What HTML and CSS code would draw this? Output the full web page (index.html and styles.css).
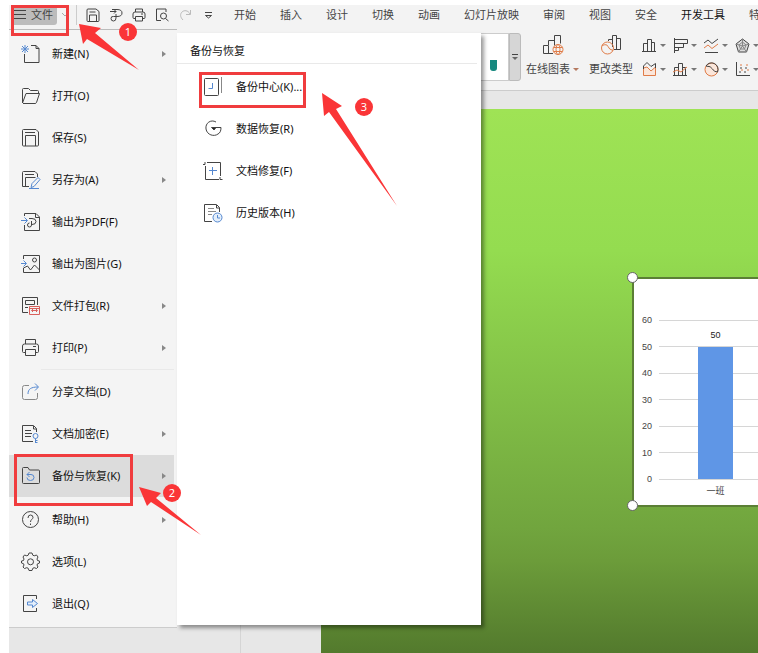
FILE: index.html
```html
<!doctype html>
<html lang="zh-CN">
<head>
  <meta charset="utf-8">
  <title>演示文稿</title>
  <link rel="stylesheet" href="styles.css">
</head>
<body>
  <div class="app">
    <header class="ribbon">
      <div class="tab-row">
        <button class="file-button">
          <svg width="13" height="12" viewBox="0 0 13 12"><path d="M0 1.500h13M0 5.500h13M0 9.500h13"/></svg>文件
        </button>
        <button class="file-more" aria-label="更多"><svg width="8" height="6" viewBox="0 0 8 6"><path d="M1 1l3 3 3-3"/></svg></button>
        <div class="quick">
          <button aria-label="保存"><svg width="14" height="14" viewBox="0 0 14 14"><path d="M1 2q0-1 1-1h8l3 2.500v9q0 1-1 1H2q-1 0-1-1zM3.500 4h6M3.500 13V7h7v6"/></svg></button>
          <button aria-label="输出为PDF"><svg width="14" height="14" viewBox="0 0 14 14"><path d="M3 1.500h5q5 0 5 3.500T8 8.500H7M1 3.500h6M5 1.500l2 2-2 2M7 6v4q0 3-2.500 3T2 10.500t2.500-2H7"/></svg></button>
          <button aria-label="打印"><svg width="14" height="14" viewBox="0 0 14 14"><path d="M3.500 4V1h7v3M3.500 10.500H2q-1 0-1-1V6q0-2 2-2h8q2 0 2 2v3.500q0 1-1 1h-1.500M3.500 8.500h7V13h-7zM9 6h2"/></svg></button>
          <button aria-label="打印预览"><svg width="14" height="14" viewBox="0 0 14 14"><path d="M6 12.500H1.500V1H11v3M10.500 10.500L13.500 13"/><circle cx="8.500" cy="8" r="3"/></svg></button>
          <button class="faded" aria-label="恢复"><svg width="14" height="14" viewBox="0 0 14 14"><path d="M12.500 2v4.500H8M12 6C10 2 6 2 4 4s-2 5 1 8"/></svg></button>
          <button aria-label="自定义"><svg width="14" height="14" viewBox="0 0 14 14"><path d="M4 4.500h7M4.500 7.500L7.500 10l3-2.500z"/></svg></button>
        </div>
        <nav class="tabs">
          <button>开始</button>
          <button>插入</button>
          <button>设计</button>
          <button>切换</button>
          <button>动画</button>
          <button>幻灯片放映</button>
          <button>审阅</button>
          <button>视图</button>
          <button>安全</button>
          <button class="strong">开发工具</button>
          <button>特色</button>
        </nav>
      </div>
      <div class="tools">
        <div class="gallery"><i class="swatch"></i></div>
        <button class="gallery-more" aria-label="更多样式"><svg width="6" height="6" viewBox="0 0 6 6"><path d="M0 .5h6"/><path class="solid" d="M0 3h6L3 6z"/></svg></button>
        <button class="big-tool">
          <svg width="24" height="24" viewBox="0 0 24 24">
            <path class="dark" d="M12 20.500H2.500v-8h5v8M7.500 12V7.500h6v5M13.500 11V2.500h6v8"/>
            <g class="orange"><circle cx="17" cy="16.500" r="5"/><ellipse cx="17" cy="16.500" rx="2" ry="5"/><path d="M12.500 14.500h9M12.500 18.500h9"/></g>
          </svg>
          <span>在线图表<i class="caret orange-caret"></i></span>
        </button>
        <button class="big-tool second">
          <svg width="24" height="24" viewBox="0 0 24 24">
            <path class="dark" d="M9.500 8V6.500h4V13M13.500 14V2.500h4V17M17.500 5.500h4v11H15"/>
            <g class="orange"><circle cx="8.500" cy="15" r="6"/><path d="M3 12.500q5-2 6 1t5 4"/></g>
          </svg>
          <span>更改类型</span>
        </button>
        <div class="chart-types">
          <button aria-label="柱形图"><svg width="15" height="15" viewBox="0 0 15 15"><path class="dark" d="M0 13.500h14M1.500 13.500v-8h4M5.500 13.500v-12h4v12M9.500 4.500h3v9"/></svg><i class="caret"></i></button>
          <button aria-label="条形图"><svg width="15" height="15" viewBox="0 0 15 15"><path class="dark" d="M1.500 0v15M1.500 1.500h13v4h-13M10.500 5.500v4h-9M5.500 9.500v3h-4"/></svg><i class="caret"></i></button>
          <button aria-label="折线图"><svg width="15" height="15" viewBox="0 0 15 15"><path class="dark" d="M0 5l4-3 4 3.500L14 1M1 14.500h13"/><path class="orange" d="M0 10l4-3 4 3.500L14 6"/></svg><i class="caret"></i></button>
          <button aria-label="雷达图"><svg width="15" height="15" viewBox="0 0 15 15"><path class="dark shade" d="M7.500 1L14 6l-2.500 8h-8L1 6z"/><path class="gray" d="M7.500 4L11 7l-1.500 4h-4L4 7zM7.500 1v7M14 6L7.500 8l4 6M3.500 14l4-6L1 6"/></svg><i class="caret"></i></button>
          <button aria-label="面积图"><svg width="15" height="15" viewBox="0 0 15 15"><path class="orange pale-orange" d="M1.500 6v7.500h12V5L9 9 5 5z"/><path class="dark" d="M1.500 7V4L5 .5l4 4 4.500-3V6"/></svg><i class="caret"></i></button>
          <button aria-label="组合图"><svg width="15" height="15" viewBox="0 0 15 15"><path class="dark" d="M0 13.500h14M1.500 13.500v-8h4M5.500 13.500v-12h4v12M9.500 5.500h3v8"/><path class="orange" d="M0 10l4-2 4 2 6-5"/></svg><i class="caret"></i></button>
          <button aria-label="饼图"><svg width="15" height="15" viewBox="0 0 15 15"><circle class="orange pale-orange" cx="7.500" cy="7.500" r="6.500"/><path class="dark" d="M2 4A6.500 6.500 0 0 1 13.500 10Q10 10 8.500 7T2 4"/></svg><i class="caret"></i></button>
          <button aria-label="散点图"><svg width="15" height="15" viewBox="0 0 15 15"><path class="dark" d="M1.500 0v13.500H15"/><path class="dark" stroke-dasharray="2 3" d="M4 10h10M5 6h9"/><path class="orange" stroke-dasharray="2 4" d="M5 3h9M6 8h8"/></svg><i class="caret"></i></button>
        </div>
      </div>
    </header>

    <main class="workspace">
      <aside class="thumbnails"></aside>
      <section class="stage">
        <div class="slide">
          <div class="chart">
            <i class="handle top"></i>
            <i class="handle bottom"></i>
            <div class="plot">
              <ul class="axis">
                <li>60</li>
                <li>50</li>
                <li>40</li>
                <li>30</li>
                <li>20</li>
                <li>10</li>
                <li>0</li>
              </ul>
              <div class="series">
                <span>50</span>
                <div class="bar" style="height: 83.33%"></div>
              </div>
            </div>
            <div class="category">一班</div>
          </div>
        </div>
      </section>
    </main>

    <div class="menus">
      <div class="file-menu">
        <button class="item"><svg width="20" height="20" viewBox="0 0 20 20"><path d="M10 1.500h5l3 3v14H3.500V10M15 1.500v3h3"/><path class="blue" d="M4 1v8M0 5h8M1 2l6 6M7 2L1 8"/></svg>新建(N)<i class="arrow"></i></button>
        <button class="item"><svg width="20" height="20" viewBox="0 0 20 20"><path d="M1.500 17V3.500q0-1 1-1h5l2 2h7q1 0 1 1v2M1.500 17L5 7.500h13.500l-3 9q-.5 1-1.500 1H2"/></svg>打开(O)</button>
        <button class="item"><svg width="20" height="20" viewBox="0 0 20 20"><path d="M1.500 2.500q0-1 1-1H15l2.500 2.500v13q0 1-1 1h-14q-1 0-1-1zM4.500 18V7.500h10V18M4 4.500h10"/></svg>保存(S)</button>
        <button class="item"><svg width="20" height="20" viewBox="0 0 20 20"><path d="M8 16.500H1.500v-14q0-1 1-1H14L16.500 4v3M4.500 16V7.500h10M4 4.500h9"/><path class="blue" d="M10 17.500l1-4 6-6 2 2-6 7zM8 18.500h10"/></svg>另存为(A)<i class="arrow"></i></button>
        <button class="item"><svg width="20" height="20" viewBox="0 0 20 20"><path d="M3.500 4V1.500H15L18.500 5v13.500h-15V13M14.500 2v3.500h4M8 6.500h3q4 0 4 3t-4 3h-1M10.500 9v4q0 2-2 2t-2-2 2-2"/><path class="blue" d="M0 8.500h6M3.500 5.500l3 3-3 3"/></svg>输出为PDF(F)</button>
        <button class="item"><svg width="20" height="20" viewBox="0 0 20 20"><path d="M2.500 5V1.500h16v17h-16V14l4-2 3 4 4-5 5 5"/><circle cx="13.500" cy="6" r="2"/><path class="blue" d="M0 9.500h5M2.500 6.500l3 3-3 3"/></svg>输出为图片(G)</button>
        <button class="item"><svg width="20" height="20" viewBox="0 0 20 20"><path d="M7 16.500H1.500v-15h15V9M4.500 4.500h9v4h-9zM4 11.500h3"/><path class="red" d="M8.500 10.500h10v8h-10zM8.500 12.500h10M11 14.500h5M12 13l-1.500 1.500L12 16M15 13l1.500 1.500L15 16"/></svg>文件打包(R)<i class="arrow"></i></button>
        <button class="item"><svg width="20" height="20" viewBox="0 0 20 20"><path d="M4.500 6V1.500h10V6M4 14.500H2.500q-1 0-1-1V8q0-2 2-2h12q2 0 2 2v5.500q0 1-1 1H15M4.500 11.500h10v6h-10zM12 8.500h3"/></svg>打印(P)<i class="arrow"></i></button>
        <hr>
        <button class="item"><svg width="20" height="20" viewBox="0 0 20 20"><path class="gray" d="M8 3.500H3.500q-2 0-2 2v10q0 2 2 2h11q2 0 2-2V11"/><path class="blue" d="M7 12c0-5 3-7 10-7M14 1.500L17.500 5 14 8.500"/></svg>分享文档(D)</button>
        <button class="item"><svg width="20" height="20" viewBox="0 0 20 20"><path d="M12 17.500H1.500v-16h11l3 3V8M12.500 2v3h3M4 6.500h6M4 9.500h7M4 12.500h6"/><g class="blue"><circle cx="14.500" cy="12" r="2.500"/><path d="M14.500 14.500V19M14.500 16.500h2M14.500 18.500h2"/></g></svg>文档加密(E)<i class="arrow"></i></button>
        <button class="item current"><svg width="20" height="20" viewBox="0 0 20 20"><path d="M1.500 16V2.500q0-1 1-1H7L8.500 4h9q1 0 1 1v11.500q0 1-1 1h-15q-1 0-1-1z"/><path class="blue" d="M6 8.500h4q3 0 3 3t-3.500 3-3.500-3M8.500 6L6 8.500 8.500 11"/></svg>备份与恢复(K)<i class="arrow"></i></button>
        <hr class="plain">
        <button class="item"><svg width="20" height="20" viewBox="0 0 20 20"><circle cx="9.500" cy="9.500" r="8"/><path d="M7 8q0-3 2.500-3T12 7.500C12 9 9.500 9.500 9.500 12M9.500 13.500v1.500"/></svg>帮助(H)<i class="arrow"></i></button>
        <button class="item"><svg width="20" height="20" viewBox="0 0 20 20"><path d="M8 1h3l.8 2.200 1.400.6L15.500 3 17 5l-1 2 .5 1.500L18.500 9v2l-2 .800L16 13l1 2-1.500 1.500-2.300-.8-1.400.6L11 18.500H8l-.800-2.200-1.400-.6-2.300.8L2 15l1-2-.5-1.300L.5 11V9l2-.500L3 7 2 5l1.500-2 2.300.8 1.400-.6z"/><circle cx="9.500" cy="9.800" r="3"/></svg>选项(L)</button>
        <button class="item"><svg width="20" height="20" viewBox="0 0 20 20"><path d="M15.500 5V1.500h-13v16h13V14"/><path class="blue pale" d="M6.500 8h5V5.500l5 4-5 4V11h-5z"/></svg>退出(Q)</button>
      </div>
      <div class="sub-menu">
        <h2>备份与恢复</h2>
        <button class="item"><svg width="20" height="20" viewBox="0 0 20 20"><path d="M2.500 1.500h12q1 0 1 1v15q0 1-1 1h-12q-1 0-1-1v-15q0-1 1-1z"/><path class="gray" d="M18.500 0v16"/><path class="blue" d="M9.500 6v5.500h-4"/></svg>备份中心(K)...</button>
        <button class="item"><svg width="20" height="20" viewBox="0 0 20 20"><path d="M13 3C8 0 2 4 3 10s8 8 12 5c2-1 3-3 3-6.500H9"/><path class="fill" d="M8.500 8.500h4.500l-2 2.500z"/></svg>数据恢复(R)</button>
        <button class="item"><svg width="20" height="20" viewBox="0 0 20 20"><path d="M2.500 5v13.500H16M4 1.500h13.500V15M0 3.500h2V1M17 16v2.500h2.500"/><path class="blue" d="M6 9.500h8M9.500 6v8"/></svg>文档修复(F)</button>
        <button class="item"><svg width="20" height="20" viewBox="0 0 20 20"><path d="M9 18.500H1.500v-17h12l3 3V9M13.500 2v3h3"/><path class="gray" d="M5 5.500h6M5 8.500h8M5 11.500h4"/><g class="blue"><circle class="pale" cx="14.500" cy="14.500" r="4.500"/><path d="M14.500 12v3H17"/></g></svg>历史版本(H)</button>
      </div>
    </div>

    <div class="mark mark-file"></div>
    <div class="mark mark-backup"></div>
    <div class="mark mark-center"></div>
    <svg class="pointers" width="420" height="560" viewBox="0 0 420 560">
      <path d="M79 24l22 4-6 5 44 37-52-31-4 5z"/>
      <path d="M139 487l22 6-5 5 45 37-50-33-4 4z"/>
      <path d="M322 93l20 13-6 3 61 97-68-94-5 4z"/>
    </svg>
    <span class="step step-1">1</span>
    <span class="step step-2">2</span>
    <span class="step step-3">3</span>
  </div>
</body>
</html>
```
FILE: styles.css
```css
html, body {
  margin: 0;
  padding: 0;
  height: 100%;
  overflow: hidden;
  background: #fff;
}
body {
  font-family: "Noto Sans", "Noto Sans CJK SC", sans-serif;
  font-size: 11px;
  line-height: 16px;
  color: #111;
}
* {
  box-sizing: border-box;
}
button {
  font: inherit;
  color: inherit;
  background: transparent;
  border: none;
  padding: 0;
  white-space: nowrap;
}
svg {
  display: block;
  flex: none;
  fill: none;
  stroke: #444;
}
.blue {
  stroke: #5588d0;
}
.gray {
  stroke: #888;
}
.red {
  stroke: #d8605c;
}
.orange {
  stroke: #e07c48;
}
.dark {
  stroke: #444;
}
.fill {
  fill: #222;
}
.shade {
  fill: #ddd;
}
.pale {
  fill: #e4effb;
}
.pale-orange {
  fill: #fbe6da;
}
.app {
  position: relative;
  display: flex;
  flex-flow: column nowrap;
  height: 100%;
  padding: 5px 0 0 9px;
}

/* ribbon */
.ribbon {
  flex: none;
  background: #f3f3f3;
  border-bottom: 1px solid #ccc;
}
.tab-row {
  display: flex;
  align-items: center;
  height: 20px;
  color: #444;
}
.file-button {
  display: flex;
  align-items: center;
  gap: 5px;
  height: 20px;
  margin-left: 2px;
  padding: 0 4px 0 2px;
  background: #bcbcbc;
  border-radius: 0 0 3px 3px;
}
.file-more {
  width: 20px;
  height: 20px;
  padding: 0 4px;
  border-right: 1px solid #ccc;
}
.file-more svg {
  stroke: #aaa;
}
.quick {
  display: flex;
  gap: 9px;
  margin: 0 19px 0 9px;
}
.faded svg {
  stroke: #bbb;
}
.tabs {
  display: flex;
  flex: 1;
  gap: 24px;
  overflow: hidden;
}
.strong {
  color: #111;
}
.tools {
  display: flex;
  height: 65px;
  padding-top: 8px;
  overflow: hidden;
}
.gallery {
  display: flex;
  flex: none;
  justify-content: flex-end;
  width: 500px;
  height: 48px;
  padding: 26px 11px 0 0;
  background: #fff;
  border: 1px solid #ccc;
}
.swatch {
  width: 7px;
  height: 11px;
  background: #16897f;
  border-radius: 0 0 3px 3px;
}
.gallery-more {
  flex: none;
  width: 12px;
  height: 48px;
  padding: 0 2px;
  background: #d6d6d6;
  border: 1px solid #bbb;
  border-radius: 0 3px 3px 0;
}
.solid {
  fill: #666;
  stroke: none;
}
.big-tool {
  display: flex;
  flex: none;
  flex-flow: column nowrap;
  align-items: center;
  height: 48px;
  margin-left: 5px;
  color: #444;
}
.big-tool span {
  display: flex;
  align-items: center;
  line-height: 24px;
}
.second {
  margin-left: 10px;
}
.caret {
  display: inline-block;
  border: 3px solid transparent;
  border-top-color: #777;
  border-bottom: 0;
}
.orange-caret {
  margin-left: 3px;
  border-top-color: #b5795f;
}
.chart-types {
  display: grid;
  flex: none;
  grid-template-columns: repeat(4, 31px);
  grid-auto-rows: 24px;
  margin-left: 9px;
}
.chart-types button {
  display: flex;
  align-items: center;
  gap: 3px;
}

/* slide area */
.workspace {
  flex: 1;
  display: flex;
  min-height: 0;
  background: #e7e7e7;
}
.thumbnails {
  width: 232px;
  border-right: 1px solid #d5d5d5;
}
.stage {
  flex: 1;
  display: flex;
  padding: 18px 0 0 80px;
}
.slide {
  flex: 1;
  position: relative;
  overflow: hidden;
  background: linear-gradient(#9fe355, #94dc50 26%, #71a53e 77%, #6c9c3a 83%, #537a2d);
}
.chart {
  position: absolute;
  left: 311px;
  top: 168px;
  width: 400px;
  height: 230px;
  padding: 35px 0 0 8px;
  background: #fff;
  border: 2px solid #5b7f35;
  font-family: "Liberation Sans", "Noto Sans CJK SC", sans-serif;
  font-size: 9px;
  line-height: 12px;
  color: #444;
}
.handle {
  position: absolute;
  left: -7px;
  width: 11px;
  height: 11px;
  background: #fff;
  border: 1px solid #666;
  border-radius: 50%;
}
.top {
  top: -7px;
}
.bottom {
  bottom: -6px;
}
.plot {
  display: grid;
  height: 171px;
}
.axis, .series {
  grid-area: 1 / 1;
}
.axis {
  display: flex;
  flex-flow: column nowrap;
  justify-content: space-between;
  margin: 0;
  padding: 0;
  list-style: none;
}
.axis li {
  display: grid;
  grid-template-columns: 10px 1fr;
  gap: 7px;
  align-items: center;
  text-align: right;
}
.axis li::after {
  content: "";
  height: 1px;
  background: #d6d6d6;
}
.series {
  display: flex;
  flex-flow: column nowrap;
  justify-content: flex-end;
  width: 35px;
  margin: 6px 0 6px 56px;
  text-align: center;
}
.series span {
  color: #222;
}
.bar {
  flex: none;
  margin-top: 6px;
  background: #5f96e6;
}
.category {
  width: 35px;
  margin-left: 56px;
  text-align: center;
}

/* file menu */
.menus {
  position: absolute;
  left: 9px;
  top: 29px;
  display: flex;
}
.file-menu {
  width: 168px;
  padding: 3px 3px 2px 0;
  background: #f4f4f4;
  border-top: 1px solid #bbb;
  border-bottom: 1px solid #ccc;
}
.item {
  display: flex;
  align-items: center;
  gap: 11px;
  width: 100%;
  height: 42px;
  padding: 0 8px 0 12px;
  text-align: left;
}
.arrow {
  margin-left: auto;
  border: 3px solid transparent;
  border-left: 4px solid #888;
  border-right: 0;
}
.current {
  background: #dcdcdc;
}
hr {
  height: 1px;
  margin: 0 0 1px 32px;
  border: none;
  background: #e9e9e9;
}
.plain {
  background: transparent;
}
.sub-menu {
  width: 304px;
  margin: 4px 0 3px;
  background: #fff;
  box-shadow: 3px 3px 4px rgba(0, 0, 0, 0.4);
}
.sub-menu h2 {
  margin: 0 4px 2px 0;
  padding: 10px 0 4px 13px;
  border-bottom: 1px solid #e9e9e9;
  font-size: 11px;
  font-weight: normal;
}
.sub-menu .item {
  gap: 13px;
  padding-left: 26px;
}

/* tutorial steps */
.mark {
  position: absolute;
  border: 3px solid #f03c3e;
}
.mark-file {
  left: 11px;
  top: 5px;
  width: 58px;
  height: 31px;
}
.mark-backup {
  left: 14px;
  top: 454px;
  width: 119px;
  height: 52px;
}
.mark-center {
  left: 199px;
  top: 72px;
  width: 107px;
  height: 36px;
}
.pointers {
  position: absolute;
  left: 0;
  top: 0;
  fill: #fa3537;
  stroke: none;
  pointer-events: none;
}
.step {
  position: absolute;
  width: 18px;
  height: 18px;
  border-radius: 50%;
  background: #fa3537;
  color: #fff;
  line-height: 18px;
  text-align: center;
}
.step-1 {
  left: 119px;
  top: 23px;
}
.step-2 {
  left: 163px;
  top: 484px;
}
.step-3 {
  left: 355px;
  top: 98px;
}
```
